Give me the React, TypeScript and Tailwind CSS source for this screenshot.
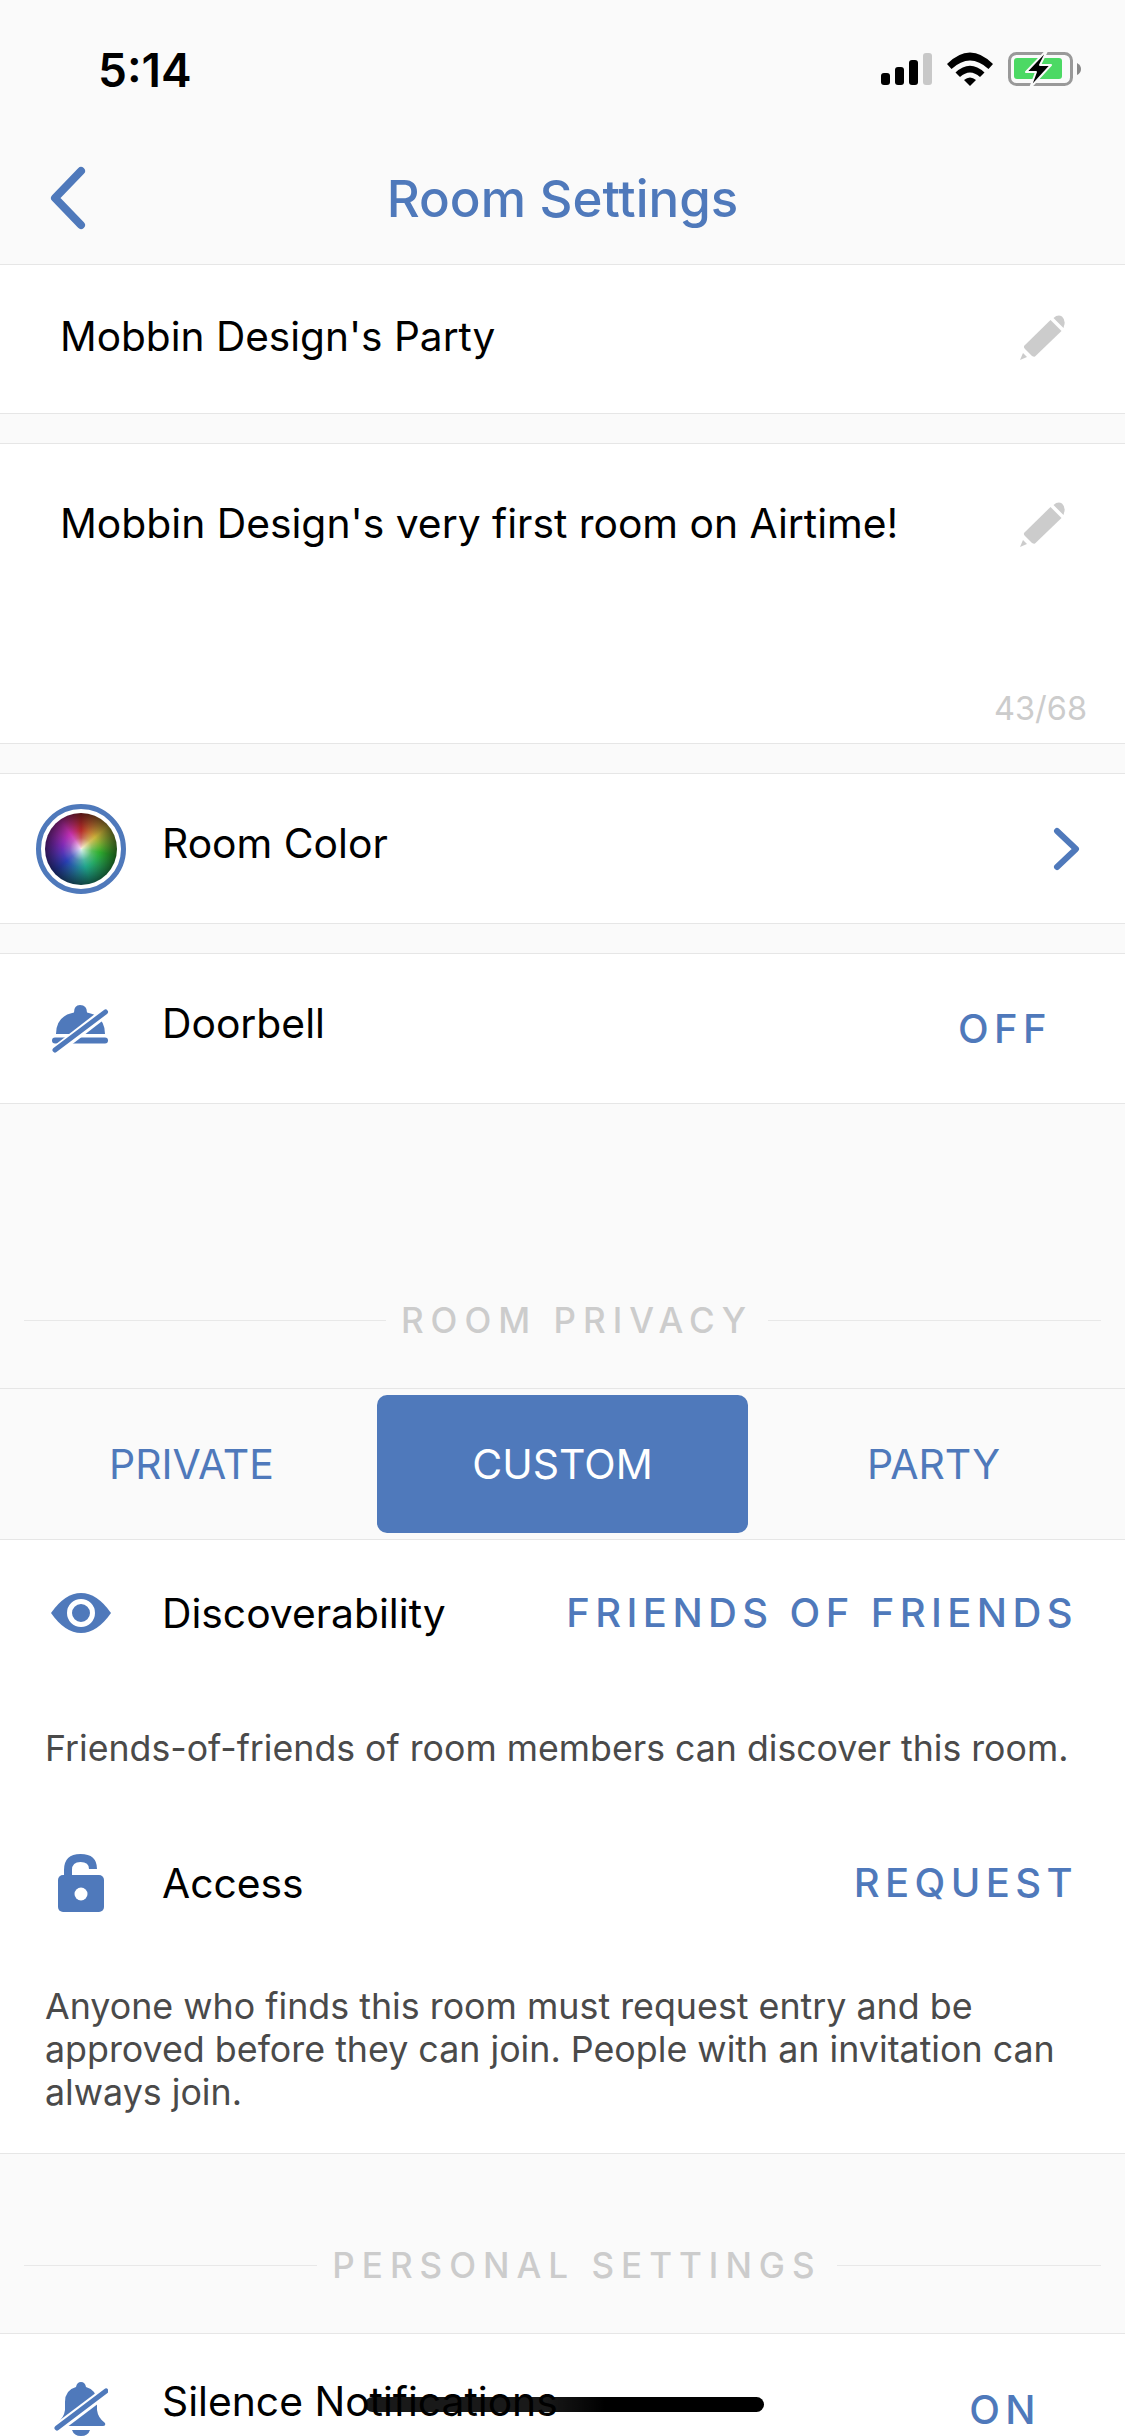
import React from 'react';

const blue = 'text-[#4f79bb]';

const Pencil = () => (
  <svg width="45" height="45" viewBox="0 0 45 45" fill="#cccccc">
    <path d="M0 45 L3 38 L7 42 Z" />
    <path d="M4 31 L30.5 5 L41.5 16 L15 41.5 Q14 42 12 41 L5 34 Q3.5 32.5 4 31 Z" />
    <path d="M33.5 3 Q38 -1 42 1.5 Q46 5.5 44 11 L43.5 13 Z" />
  </svg>
);

const Chevron = ({ points, w, h, sw }: { points: string; w: number; h: number; sw: number }) => (
  <svg width={w} height={h} viewBox={`0 0 ${w} ${h}`} fill="none" stroke="#4f79bb" strokeWidth={sw} strokeLinecap="round" strokeLinejoin="round">
    <polyline points={points} />
  </svg>
);

const StatusIcons = () => (
  <svg width="202" height="36" viewBox="0 0 202 36">
    <rect x="1" y="21" width="9" height="12" rx="3" fill="#000" />
    <rect x="15" y="15" width="9" height="18" rx="3" fill="#000" />
    <rect x="29" y="8" width="9" height="25" rx="3" fill="#000" />
    <rect x="43" y="1" width="9" height="32" rx="3" fill="#c8c8c8" />
    <path d="M67 12 Q90 -11 113 12 L108.5 17 Q90 0 71.5 17 Z" fill="#000" />
    <path d="M75.5 20.5 Q90 7 104.5 20.5 L100 25 Q90 16 80 25 Z" fill="#000" />
    <path d="M84 28 Q90 23 96 28 L90 34 Z" fill="#000" />
    <rect x="129.5" y="1.5" width="62" height="31" rx="7" fill="none" stroke="#999" strokeWidth="3" />
    <rect x="134" y="6" width="48" height="21" rx="3" fill="#4cd964" />
    <path d="M197 11 Q201 13 201 17 Q201 21 197 23 Z" fill="#888" />
    <path d="M166 -1 L146 20 L156 20 L150 36 L171 13 L160 13 L167 -1 Z" fill="#000" stroke="#fafafa" strokeWidth="2" strokeLinejoin="round" />
  </svg>
);

const ColorOrb = () => (
  <div className="w-[90px] h-[90px] rounded-full border-[5px] border-[#4f79bb] flex items-center justify-center bg-white">
    <div className="w-[72px] h-[72px] rounded-full bg-[radial-gradient(circle_at_50%_50%,rgba(255,255,255,0.85)_0%,rgba(255,255,255,0.2)_22%,rgba(0,0,0,0)_36%,rgba(0,0,0,0.5)_68%,rgba(0,0,0,0.95)_98%),conic-gradient(from_0deg,#b52a2a,#c9b23a_50deg,#2fae2f_100deg,#20a58a_165deg,#2a3fb5_230deg,#7a2ab5_280deg,#c22fae_325deg,#b52a2a)]" />
  </div>
);

const DoorbellOff = () => (
  <svg width="58" height="48" viewBox="0 0 58 48" fill="#4f79bb">
    <path d="M4 29 Q4 11 22 7.5 Q22 0 28 0 Q35 0 35 7.5 Q53 11 53 29 Z" />
    <rect x="0" y="32.5" width="56" height="6" rx="3" />
    <line x1="2" y1="47" x2="55" y2="6" stroke="#ffffff" strokeWidth="10" />
    <line x1="3" y1="45" x2="53.5" y2="7" stroke="#4f79bb" strokeWidth="5" strokeLinecap="round" />
  </svg>
);

const BellOff = () => (
  <svg width="54" height="56" viewBox="0 0 54 56" fill="#4f79bb">
    <path d="M27 0 Q31 0 32 5 Q43 8 43 20 L43 28 Q44 36 51 41 Q52 44 49 44 L5 44 Q2 44 3 41 Q10 36 11 28 L11 20 Q11 8 22 5 Q23 0 27 0 Z" />
    <path d="M18 48 L36 48 Q34 54 27 54 Q20 54 18 48 Z" />
    <line x1="1" y1="48" x2="54" y2="8" stroke="#ffffff" strokeWidth="10" />
    <line x1="3" y1="46" x2="52" y2="9" stroke="#4f79bb" strokeWidth="5" strokeLinecap="round" />
  </svg>
);

const Eye = () => (
  <svg width="60" height="40" viewBox="0 0 60 40">
    <path d="M0 20 Q14 0 30 0 Q46 0 60 20 Q46 40 30 40 Q14 40 0 20 Z" fill="#4f79bb" />
    <circle cx="30" cy="20" r="11.5" fill="#4f79bb" stroke="#fff" strokeWidth="5" />
  </svg>
);

const Lock = () => (
  <svg width="46" height="58" viewBox="0 0 46 58">
    <path d="M10 24 L10 16 Q10 4 22.5 4 Q35 4 35 15" fill="none" stroke="#4f79bb" strokeWidth="8" />
    <rect x="0" y="21" width="46" height="37" rx="5" fill="#4f79bb" />
    <circle cx="23" cy="40" r="6.5" fill="#fff" />
  </svg>
);

const SectionLabel = ({ children, left, right }: { children: string; left: string; right: string }) => (
  <div className="flex items-center px-[24px]">
    <div className={`h-px bg-[#e8e8e8] ${left}`} />
    <div className="flex-1 text-center text-[35px] leading-[40px] font-medium tracking-[0.2em] text-[#cccccc] whitespace-nowrap">{children}</div>
    <div className={`h-px bg-[#e8e8e8] ${right}`} />
  </div>
);

const RowValue = ({ children }: { children: string }) => (
  <span className={`text-[40px] leading-[46px] font-medium tracking-[0.135em] ${blue} whitespace-nowrap`}>{children}</span>
);

const IconSlot = ({ children }: { children: React.ReactNode }) => (
  <div className="w-[162px] flex justify-center shrink-0">{children}</div>
);

export default function App() {
  return (
    <div className="relative h-[2436px] w-[1125px] overflow-hidden bg-[#fafafa] font-['Inter',sans-serif] text-black">
      {/* status bar + nav */}
      <div className="h-[265px] border-b border-[#e6e6e6]">
        <div className="flex items-start justify-between pt-[52px] pl-[98px] pr-[43px] h-[130px]">
          <span className="text-[46px] leading-[36px] font-semibold">5:14</span>
          <StatusIcons />
        </div>
        <div className="relative flex items-center justify-center h-[110px]">
          <div className="absolute left-[48px] top-[36px]">
            <Chevron w={40} h={64} sw={8} points="33,5 7,32 33,59" />
          </div>
          <span className={`text-[51px] leading-[60px] font-medium ${blue} mt-[27px]`}>Room Settings</span>
        </div>
      </div>

      <div className="h-[149px] bg-white border-b border-[#e6e6e6] flex items-center justify-between pl-[60px] pr-[60px]">
        <span className="text-[40.6px] leading-[48px] pb-[5px]">Mobbin Design's Party</span>
        <div className="-mt-[4px]"><Pencil /></div>
      </div>

      <div className="mt-[29px] h-[301px] bg-white border-y border-[#e6e6e6] pl-[60px] pr-[38px]">
        <div className="flex items-start justify-between pt-[58px] pr-[22px]">
          <span className="text-[40.8px] leading-[48px] -mt-[3px]">Mobbin Design's very first room on Airtime!</span>
          <Pencil />
        </div>
        <div className="text-right text-[32.5px] leading-[40px] text-[#cccccc] mt-[142px]">43/68</div>
      </div>

      <div className="mt-[29px] h-[151px] bg-white border-y border-[#e6e6e6] flex items-center pr-[43px]">
        <div className="w-[162px] pl-[36px] shrink-0"><ColorOrb /></div>
        <span className="flex-1 text-[40.8px] leading-[48px] pb-[11px]">Room Color</span>
        <Chevron w={30} h={44} sw={6} points="5,4 24,22 5,40" />
      </div>

      <div className="mt-[29px] h-[151px] bg-white border-y border-[#e6e6e6] flex items-center pr-[73px]">
        <IconSlot><DoorbellOff /></IconSlot>
        <span className="flex-1 text-[40.8px] leading-[48px] pb-[11px]">Doorbell</span>
        <RowValue>OFF</RowValue>
      </div>

      <div className="mt-[196px]">
        <SectionLabel left="w-[362px]" right="w-[333px]">ROOM PRIVACY</SectionLabel>
      </div>

      <div className="mt-[48px] h-[152px] border-y border-[#e6e6e6] grid grid-cols-3 px-[6px] py-[6px]">
        <div className={`flex items-center justify-center text-[41px] pt-[2px] ${blue}`}>PRIVATE</div>
        <div className="flex items-center justify-center text-[41px] pt-[2px] text-white bg-[#4f79bb] rounded-[10px]">CUSTOM</div>
        <div className={`flex items-center justify-center text-[41px] pt-[2px] ${blue}`}>PARTY</div>
      </div>

      <div className="h-[614px] bg-white border-b border-[#e6e6e6]">
        <div className="h-[146px] flex items-center pr-[47px]">
          <IconSlot><Eye /></IconSlot>
          <span className="flex-1 text-[40.8px] leading-[48px]">Discoverability</span>
          <RowValue>FRIENDS OF FRIENDS</RowValue>
        </div>
        <p className="px-[45px] mt-[41px] text-[35.7px] leading-[43px] text-[#4a4a4a] whitespace-nowrap">Friends-of-friends of room members can discover this room.</p>
        <div className="h-[178px] flex items-center pr-[47px] mt-[24px]">
          <IconSlot><Lock /></IconSlot>
          <span className="flex-1 text-[40.8px] leading-[48px]">Access</span>
          <RowValue>REQUEST</RowValue>
        </div>
        <p className="px-[45px] text-[35.8px] leading-[43px] text-[#4a4a4a] mt-[13px] whitespace-nowrap">
          Anyone who finds this room must request entry and be<br />
          approved before they can join. People with an invitation can<br />
          always join.
        </p>
      </div>

      <div className="mt-[91px]">
        <SectionLabel left="w-[293px]" right="w-[264px]">PERSONAL SETTINGS</SectionLabel>
      </div>

      <div className="mt-[48px] h-[140px] bg-white border-t border-[#e6e6e6] flex items-start pr-[84px] pt-[48px]">
        <IconSlot><BellOff /></IconSlot>
        <span className="flex-1 text-[40.8px] leading-[48px] -mt-[5px]">Silence Notifications</span>
        <div className="pt-[5px]"><RowValue>ON</RowValue></div>
      </div>

      <div className="absolute left-[365px] top-[2397px] w-[399px] h-[15px] rounded-full bg-[linear-gradient(90deg,rgba(0,0,0,0.9)_45%,#000_60%)]" />
    </div>
  );
}
